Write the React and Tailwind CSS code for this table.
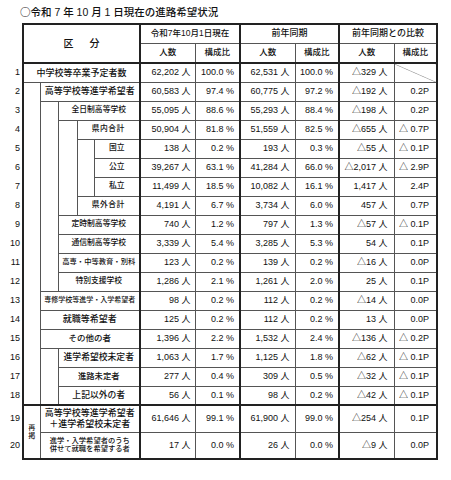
import React from 'react';

const font = { fontFamily: '"Liberation Sans", "Noto Sans CJK JP", sans-serif' };

const thin = 'border border-[#555]';
const thickL = 'border-l-2 border-l-[#222]';

const dataCls = [
  'border-l-2 border-l-[#222] pr-[4px]',
  'pr-[5px]',
  'border-l-2 border-l-[#222] pr-[5px]',
  'pr-[5px]',
  'border-l-2 border-l-[#222] pr-[6px]',
  'border-r-2 border-r-[#222] pr-[7px]',
];

const diag =
  'bg-[linear-gradient(to_top_right,transparent_calc(50%_-_0.6px),#999_50%,transparent_calc(50%_+_0.6px))]';

const Row = ({ n, pre, label, span, lcls = 'text-[9px]', vals, h = 'h-[19px]', rcls = '' }) => (
  <tr className={h}>
    <td className="text-right pr-[2px] text-[9px] align-middle">{n}</td>
    {pre}
    <td
      colSpan={span}
      className={`${thin} ${rcls} ${span === 5 ? thickL : ''} text-center font-medium whitespace-nowrap leading-[1.15] ${lcls}`}
    >
      {label}
    </td>
    {vals.map((v, i) => (
      <td
        key={i}
        className={`${thin} ${rcls} ${dataCls[i]} text-right text-[9px] whitespace-nowrap ${v === null ? diag : ''}`}
      >
        {v}
      </td>
    ))}
  </tr>
);

const Ind = ({ rows, cls = '', children }) => (
  <td rowSpan={rows} className={`${thin} ${cls}`}>
    {children}
  </td>
);

const App = () => {
  return (
    <div className="w-[451px] h-[480px] bg-white text-[#111]" style={font}>
      <div className="h-[23px] pt-[5px] pl-[20px] text-[10.5px] leading-[14px] font-medium">
        <span style={{ fontFamily: '"Noto Sans CJK JP", sans-serif' }}>○</span>令和 7 年 10 月 1 日現在の進路希望状況
      </div>
      <table className="w-[437px] table-fixed border-collapse">
        <colgroup>
          <col className="w-[23px]" />
          <col className="w-[17px]" />
          <col className="w-[18px]" />
          <col className="w-[19px]" />
          <col className="w-[17px]" />
          <col className="w-[46px]" />
          <col className="w-[55px]" />
          <col className="w-[45px]" />
          <col className="w-[55px]" />
          <col className="w-[44px]" />
          <col className="w-[55px]" />
          <col className="w-[43px]" />
        </colgroup>
        <tbody>
          <tr className="h-[19px]">
            <td rowSpan={2}></td>
            <td
              colSpan={5}
              rowSpan={2}
              className={`${thin} border-t-2 border-t-[#222] border-b-2 border-b-[#222] ${thickL} text-center text-[10px] font-medium`}
            >
              区<span className="inline-block w-[16px]"></span>分
            </td>
            <td colSpan={2} className={`${thin} border-t-2 border-t-[#222] ${thickL} text-center text-[8.5px] font-medium whitespace-nowrap`}>
              令和7年10月1日現在
            </td>
            <td colSpan={2} className={`${thin} border-t-2 border-t-[#222] ${thickL} text-center text-[9px] font-medium`}>
              前年同期
            </td>
            <td colSpan={2} className={`${thin} border-t-2 border-t-[#222] border-r-2 border-r-[#222] ${thickL} text-center text-[9px] font-medium whitespace-nowrap`}>
              前年同期との比較
            </td>
          </tr>
          <tr className="h-[20px]">
            {['人数', '構成比', '人数', '構成比', '人数', '構成比'].map((t, i) => (
              <td
                key={i}
                className={`${thin} border-b-2 border-b-[#222] ${i % 2 === 0 ? thickL : ''} ${i === 5 ? 'border-r-2 border-r-[#222]' : ''} text-center text-[8.5px] font-medium`}
              >
                {t}
              </td>
            ))}
          </tr>

          <Row n="1" span={5} label="中学校等卒業予定者数" vals={['62,202 人', '100.0 %', '62,531 人', '100.0 %', '△329 人', null]} />
          <Row
            n="2"
            pre={<Ind rows={17} cls={thickL} />}
            span={4}
            label="高等学校等進学希望者"
            vals={['60,583 人', '97.4 %', '60,775 人', '97.2 %', '△192 人', '0.2P']}
          />
          <Row
            n="3"
            pre={<Ind rows={10} />}
            span={3}
            lcls="text-[7.8px]"
            label="全日制高等学校"
            vals={['55,095 人', '88.6 %', '55,293 人', '88.4 %', '△198 人', '0.2P']}
          />
          <Row
            n="4"
            pre={<Ind rows={5} />}
            span={2}
            lcls="text-[7.8px] tracking-[0.5px]"
            label="県内合計"
            vals={['50,904 人', '81.8 %', '51,559 人', '82.5 %', '△655 人', '△ 0.7P']}
          />
          <Row
            n="5"
            pre={<Ind rows={3} />}
            span={1}
            lcls="text-[7.8px]"
            label="国立"
            vals={['138 人', '0.2 %', '193 人', '0.3 %', '△55 人', '△ 0.1P']}
          />
          <Row n="6" span={1} lcls="text-[7.8px]" label="公立" vals={['39,267 人', '63.1 %', '41,284 人', '66.0 %', '△2,017 人', '△ 2.9P']} />
          <Row n="7" span={1} lcls="text-[7.8px]" label="私立" vals={['11,499 人', '18.5 %', '10,082 人', '16.1 %', '1,417 人', '2.4P']} />
          <Row n="8" span={2} lcls="text-[7.8px] tracking-[0.5px]" label="県外合計" vals={['4,191 人', '6.7 %', '3,734 人', '6.0 %', '457 人', '0.7P']} />
          <Row n="9" span={3} lcls="text-[7.8px]" label="定時制高等学校" vals={['740 人', '1.2 %', '797 人', '1.3 %', '△57 人', '△ 0.1P']} />
          <Row n="10" span={3} lcls="text-[7.8px]" label="通信制高等学校" vals={['3,339 人', '5.4 %', '3,285 人', '5.3 %', '54 人', '0.1P']} />
          <Row n="11" span={3} lcls="text-[7.3px]" label="高専・中等教育・別科" vals={['123 人', '0.2 %', '139 人', '0.2 %', '△16 人', '0.0P']} />
          <Row n="12" span={3} lcls="text-[7.8px]" label="特別支援学校" vals={['1,286 人', '2.1 %', '1,261 人', '2.0 %', '25 人', '0.1P']} />
          <Row n="13" span={4} lcls="text-[7px]" label="専修学校等進学・入学希望者" vals={['98 人', '0.2 %', '112 人', '0.2 %', '△14 人', '0.0P']} />
          <Row n="14" span={4} lcls="text-[9px]" label="就職等希望者" vals={['125 人', '0.2 %', '112 人', '0.2 %', '13 人', '0.0P']} />
          <Row n="15" span={4} lcls="text-[8.5px]" label="その他の者" vals={['1,396 人', '2.2 %', '1,532 人', '2.4 %', '△136 人', '△ 0.2P']} />
          <Row
            n="16"
            pre={<Ind rows={3} />}
            span={3}
            lcls="text-[8.8px]"
            label="進学希望校未定者"
            vals={['1,063 人', '1.7 %', '1,125 人', '1.8 %', '△62 人', '△ 0.1P']}
          />
          <Row n="17" span={3} lcls="text-[8.3px]" label="進路未定者" vals={['277 人', '0.4 %', '309 人', '0.5 %', '△32 人', '△ 0.1P']} />
          <Row n="18" span={3} lcls="text-[8.8px]" label="上記以外の者" vals={['56 人', '0.1 %', '98 人', '0.2 %', '△42 人', '△ 0.1P']} />
          <Row
            n="19"
            h="h-[27px]"
            rcls="border-t-2 border-t-[#222]"
            pre={
              <Ind rows={2} cls={`${thickL} border-t-2 border-t-[#222] border-b-2 border-b-[#222] text-center text-[7px] font-medium leading-[8px]`}>
                再<br />掲
              </Ind>
            }
            span={4}
            lcls="text-[9px]"
            label={
              <>
                高等学校等進学希望者
                <br />
                ＋進学希望校未定者
              </>
            }
            vals={['61,646 人', '99.1 %', '61,900 人', '99.0 %', '△254 人', '0.1P']}
          />
          <Row
            n="20"
            h="h-[27px]"
            rcls="border-b-2 border-b-[#222]"
            span={4}
            lcls="text-[7.3px]"
            label={
              <>
                進学・入学希望者のうち
                <br />
                併せて就職を希望する者
              </>
            }
            vals={['17 人', '0.0 %', '26 人', '0.0 %', '△9 人', '0.0P']}
          />
        </tbody>
      </table>
    </div>
  );
};

export default App;
